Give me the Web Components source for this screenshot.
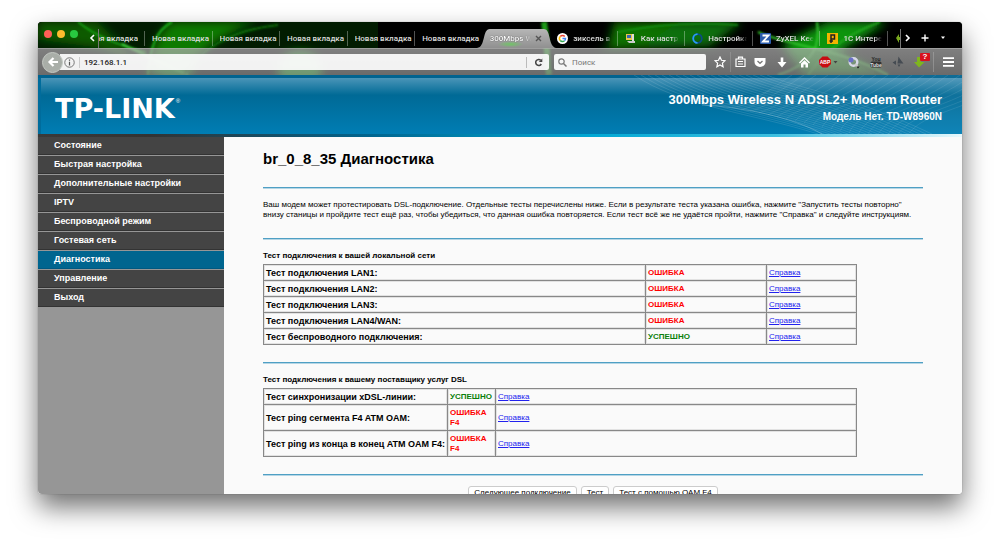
<!DOCTYPE html>
<html lang="ru">
<head>
<meta charset="utf-8">
<title>300Mbps Wireless N ADSL2+ Modem Router</title>
<style>
html, body { margin: 0; background: #fff; }
body { font-family: "Liberation Sans", Arial, sans-serif; font-size: 8px; color: #000; overflow: hidden; }
</style>
</head>
<body>
<browser-window>
  <browser-chrome slot="chrome"></browser-chrome>
  <router-header slot="page"></router-header>
  <router-page slot="page">
    <side-menu slot="side"></side-menu>
    <diagnostics-page slot="main"></diagnostics-page>
  </router-page>
</browser-window>
<script>
const define = (name, html, setup) => customElements.define(name, class extends HTMLElement {
  connectedCallback() {
    if (this.shadowRoot) return;
    this.attachShadow({ mode: 'open' }).innerHTML = html;
    if (setup) setup(this, this.shadowRoot);
  }
});

define('browser-window', `
<style>
:host { display: flex; flex-direction: column; box-sizing: border-box; height: 100vh; padding: 22px 38px 54px; }
.win { display: flex; flex-direction: column; flex: 1; min-width: 0; min-height: 0; overflow: hidden; border-radius: 4px; background: #fafafa; }
.shade { display: flex; flex: 1; min-height: 0; border-radius: 4px; box-shadow: 0 0 1px rgba(0,0,0,.5), 0 13px 27px rgba(0,0,0,.56); }
</style>
<div class="shade"><div class="win"><slot name="chrome"></slot><slot name="page"></slot></div></div>`);

define('browser-tab', `
<style>
:host { display: block; min-width: 0; position: relative; color: #dcdcdc; font-weight: 500; }
.tab { all: unset; position: relative; box-sizing: border-box; display: flex; align-items: center; gap: 5px; width: 100%; height: 26px; padding: 6px 2px 0 7px; cursor: default; }
.tab::after { content: ""; position: absolute; right: 0; top: 9px; width: 1px; height: 15px; background: rgba(255,255,255,.32); }
.txt { flex: 1; min-width: 0; overflow: hidden; white-space: nowrap; display: flex; }
:host([fade]) .tab { padding-right: 6px; }
:host([fade]) .txt { -webkit-mask-image: linear-gradient(90deg, #000 80%, transparent); mask-image: linear-gradient(90deg, #000 80%, transparent); }
:host([plain]) .tab::after { display: none; }
:host([active]) { color: #fff; text-shadow: 0 0 1px #222; }
:host([active]) .tab { gap: 2px; }
.shape { display: none; }
:host([active]) .shape { display: block; position: absolute; left: -6px; top: 7px; width: calc(100% + 12px); height: 19px; }
:host([tail]) .txt { justify-content: flex-end; }
:host([tail]) .tab { padding-left: 0; padding-right: 7px; }
::slotted(svg) { width: 11px; height: 11px; flex: none; }
</style>
<svg class="shape" viewBox="0 0 80 19" preserveAspectRatio="none" aria-hidden="true"><defs><linearGradient id="g" x1="0" y1="0" x2="0" y2="1"><stop offset="0" stop-color="#b6b6b6"/><stop offset="1" stop-color="#909090"/></linearGradient><radialGradient id="h" cx=".42" cy=".8" r=".16"><stop offset="0" stop-color="#6fc565"/><stop offset="1" stop-color="#6fc565" stop-opacity="0"/></radialGradient></defs><path d="M0 19C9 18 5 0 13 0H67C75 0 71 18 80 19Z" fill="url(#g)"/><path d="M0 19C9 18 5 0 13 0H67C75 0 71 18 80 19Z" fill="url(#h)"/></svg>
<button class="tab" role="tab"><slot name="icon"></slot><span class="txt"><slot></slot></span><slot name="end"></slot></button>`);

define('browser-chrome', `
<style>
:host { display: block; position: relative; flex: none; background: #010; font-family: Roboto, "Open Sans", sans-serif; font-size: 8px; }
button { all: unset; display: flex; align-items: center; justify-content: center; box-sizing: border-box; cursor: default; }
.aurora { position: absolute; inset: 0; width: 100%; height: 100%; }
.tabs { position: relative; display: flex; height: 26px; color: #fff; }
.lights { display: flex; gap: 5px; padding: 8px 0 0 6px; width: 44px; box-sizing: border-box; }
.lights i { width: 8px; height: 8px; border-radius: 50%; }
.scroll { width: 17px; padding: 5px 0 0 2px; }
.strip { flex: 1; min-width: 0; display: grid; grid-template-columns: 46px repeat(11, minmax(0, 1fr)) 12px; overflow: hidden; box-shadow: -1px 0 #777, 1px 0 #777; clip-path: inset(7px -1px 0 -1px); }
.end { display: flex; padding: 5px 0 0 1px; }
.end button { width: 17px; }
.end button + button { width: 18px; }
.bar { position: relative; display: flex; align-items: center; height: 27px; box-sizing: border-box; padding-left: 4px; background: linear-gradient(rgba(176,176,176,.72), rgba(140,140,140,.76)); border-top: 1px solid rgba(200,200,200,.55); }
.back { width: 21px; height: 21px; flex: none; border-radius: 50%; background: #a9aea8; border: 1px solid #c4c9c3; position: relative; z-index: 1; }
.url { display: flex; align-items: center; flex: 1; min-width: 0; height: 16px; margin-left: -3px; padding-left: 4px; gap: 4px; background: rgba(255,255,255,.91); border-radius: 0 2px 2px 0; }
.url button { width: 23px; height: 11px; border-left: 1px solid #bbb; }
input { all: unset; flex: 1; min-width: 0; color: #222; font-size: 8px; }
.url input { border-left: 1px solid #ccc; padding-left: 4px; height: 11px; line-height: 11px; font-weight: 500; }
.search { display: flex; align-items: center; gap: 5px; box-sizing: border-box; width: 152px; height: 16px; margin: 0 3px 0 5px; padding-left: 4px; background: rgba(255,255,255,.93); border-radius: 2px; }
input::placeholder { color: #777; opacity: 1; }
.tools { display: grid; grid-template-columns: 21px 19px 22px 22px 22px 27px 23px 22px 21px 25px 29px; }
.tools button { height: 20px; }
.tools button:nth-child(2) { border-left: 1px solid rgba(255,255,255,.15); }
.tools .menu { border-left: 1px solid rgba(255,255,255,.2); }
.dl { position: relative; }
.badge { position: absolute; right: 3px; top: 1px; width: 10px; height: 8px; border-radius: 1px; background: #d8101c; color: #fff; font: bold 8px/8px "Liberation Sans", sans-serif; text-align: center; }
svg { display: block; }
</style>
<svg class="aurora" viewBox="0 0 924 53" preserveAspectRatio="none" aria-hidden="true">
<defs><filter id="b"><feGaussianBlur stdDeviation="5"/></filter><filter id="s"><feGaussianBlur stdDeviation="1"/></filter></defs>
<rect width="924" height="53" fill="#000"/>
<rect width="340" height="26" fill="#021c01"/>
<g filter="url(#b)">
<path d="M0 0H60L100 40 60 26 0 18Z" fill="#075a05"/>
<path d="M108 53C114 26 122 8 134 0H220C180 14 160 30 148 53Z" fill="#087a05"/>
<path d="M630 0H704L672 24 560 28 600 14Z" fill="#0a7007"/>
<path d="M744 22 790 0H850L800 30 850 53H766Z" fill="#0f940b"/>
<path d="M576 0H640L600 26H570Z" fill="#0a7206"/>
<ellipse cx="262" cy="48" rx="22" ry="18" fill="#19b514"/>
<ellipse cx="136" cy="46" rx="20" ry="12" fill="#16a812"/>
</g>
<g filter="url(#s)" fill="none">
<path d="M40 0C60 16 82 24 108 30" stroke="#18a013" stroke-width="2"/>
<path d="M134 0C118 8 112 26 110 53" stroke="#22b81c" stroke-width="2"/>
<path d="M84 22C104 32 130 44 150 53" stroke="#45dd3d" stroke-width="2"/>
<path d="M146 53C160 30 190 8 240 3" stroke="#0c7009" stroke-width="2"/>
<path d="M506 0C509 20 509 40 511 53" stroke="#1a9a15" stroke-width="6"/>
<path d="M779 0C782 20 780 40 740 53" stroke="#36c830" stroke-width="2"/>
<path d="M842 0C810 12 790 26 770 53" stroke="#23a81e" stroke-width="2"/>
<path d="M720 10C750 24 800 26 850 53" stroke="#35c82e" stroke-width="2"/>
<path d="M580 10C620 2 660 0 700 3" stroke="#12900e" stroke-width="2"/>
</g></svg>
<div class="tabs" role="tablist">
<div class="lights"><i style="background:#ff5f57"></i><i style="background:#fdbc2e"></i><i style="background:#28c940"></i></div>
<button class="scroll" aria-label="Назад по вкладкам"><svg width="6" height="8" viewBox="0 0 6 8"><path d="M5 1 2 4l3 3" fill="none" stroke="#fff" stroke-width="1.6"/></svg></button>
<div class="strip">
<browser-tab tail>Новая вкладка</browser-tab>
<browser-tab>Новая вкладка</browser-tab>
<browser-tab>Новая вкладка</browser-tab>
<browser-tab>Новая вкладка</browser-tab>
<browser-tab>Новая вкладка</browser-tab>
<browser-tab plain>Новая вкладка</browser-tab>
<browser-tab active plain fade>300Mbps W<svg slot="end" viewBox="0 0 11 11"><path d="M3 3l5 5M8 3l-5 5" stroke="#555" stroke-width="1.4"/></svg></browser-tab>
<browser-tab fade><svg slot="icon" viewBox="0 0 22 22"><circle cx="11" cy="11" r="11" fill="#fff"/><g fill="none" stroke-width="3"><path d="M6.5 7A6 6 0 0 1 15.500 7" stroke="#ea4335"/><path d="M6.500 7A6 6 0 0 0 6.500 15" stroke="#fbbc05"/><path d="M6.500 15A6 6 0 0 0 15 15.500" stroke="#34a853"/><path d="M15 15.500A6 6 0 0 0 17 11H11" stroke="#4285f4"/></g></svg>зиксель в с</browser-tab>
<browser-tab fade><svg slot="icon" viewBox="0 0 11 11"><rect x="1" y="1" width="6" height="6" fill="#e8c84a"/><rect x="2" y="2" width="4" height="3" fill="#3567b5"/><path d="M7 1h2v7H7z" fill="#ddd"/><path d="M2 8h8v2H4z" fill="#ccc"/></svg>Как настр</browser-tab>
<browser-tab fade><svg slot="icon" viewBox="0 0 11 11"><circle cx="5.500" cy="5.500" r="4.300" fill="none" stroke="#0b4a8a" stroke-width="1.800"/><path d="M5.500 9.800A4.300 4.300 0 0 1 5.500 1.200" fill="none" stroke="#2a9df4" stroke-width="1.800"/></svg>Настройка</browser-tab>
<browser-tab fade><svg slot="icon" viewBox="0 0 11 11"><rect width="11" height="11" rx="1" fill="#2b5cad"/><path d="M2.500 2.500h6L3 8.500h6" fill="none" stroke="#fff" stroke-width="1.800"/></svg>ZyXEL Kee</browser-tab>
<browser-tab fade><svg slot="icon" viewBox="0 0 11 11"><rect width="11" height="11" fill="#f5b400"/><path d="M4 10V2h3.500v4H4M2.500 8H6" fill="none" stroke="#222" stroke-width="1.500"/></svg>1С Интере</browser-tab>
<browser-tab plain><svg slot="icon" viewBox="0 0 11 11"><path d="M1 5l3-4v3h3v3H4v3z" fill="#7aa81e"/></svg></browser-tab>
</div>
<div class="end">
<button aria-label="Вперёд по вкладкам"><svg style="margin-right:3px" width="6" height="8" viewBox="0 0 6 8"><path d="M1 1l3 3-3 3" fill="none" stroke="#fff" stroke-width="1.600"/></svg></button>
<button aria-label="Новая вкладка"><svg style="margin-right:5px" width="8" height="8" viewBox="0 0 8 8"><path d="M4 .500v7M.500 4h7" stroke="#fff" stroke-width="1.400"/></svg></button>
<button aria-label="Список вкладок" style="width:26px"><svg style="margin-right:12px" width="6" height="4" viewBox="0 0 6 4"><path d="M1 .500h4L3 3z" fill="#fff"/></svg></button>
</div>
</div>
<div class="bar">
<button class="back" aria-label="Назад"><svg width="12" height="12" viewBox="0 0 12 12"><path d="M6.500 2 2.500 6l4 4M2.500 6H11" fill="none" stroke="#fff" stroke-width="2.200"/></svg></button>
<div class="url"><svg width="11" height="11" viewBox="0 0 10 10"><circle cx="5" cy="5" r="4.300" fill="none" stroke="#666" stroke-width=".800"/><path d="M5 2.300v1.200M5 4.300v3.400" stroke="#555" stroke-width="1.100"/></svg>
<input aria-label="Адрес" value="192.168.1.1">
<button aria-label="Обновить"><svg width="9" height="9" viewBox="0 0 9 9"><path d="M7.300 6A3 3 0 1 1 6.800 2.300" fill="none" stroke="#444" stroke-width="1.500"/><path d="M8.300.500v3.500H4.800z" fill="#444"/></svg></button></div>
<div class="search"><svg width="9" height="9" viewBox="0 0 9 9"><circle cx="3.500" cy="3.500" r="2.700" fill="none" stroke="#777" stroke-width="1.200"/><path d="M5.500 5.500 8.500 8.500" stroke="#777" stroke-width="1.500"/></svg><input aria-label="Поиск" placeholder="Поиск"></div>
<div class="tools">
<button aria-label="Закладка"><svg width="12" height="12" viewBox="0 0 12 12"><path d="M6 1l1.500 3.300 3.500.400-2.600 2.400.700 3.600L6 8.900 2.900 10.700l.700-3.600L1 4.700l3.500-.400z" fill="none" stroke="#fff" stroke-width="1.200"/></svg></button>
<button aria-label="Все закладки"><svg width="11" height="12" viewBox="0 0 11 12"><path d="M1 3h9v7.500H1zM3.500 3V1.200h4V3M3 5.500h5M3 8h5M1 5.500h.5M1 8h.5" fill="none" stroke="#fff" stroke-width="1.200"/></svg></button>
<button aria-label="Pocket"><svg width="12" height="11" viewBox="0 0 12 11"><path d="M.500 1h11v4a5.500 5 0 0 1-11 0z" fill="#fff"/><path d="M3.500 4 6 6.300 8.500 4" fill="none" stroke="#777" stroke-width="1.300"/></svg></button>
<button aria-label="Загрузки"><svg width="10" height="11" viewBox="0 0 10 11"><path d="M3.700.500h2.600v4.500H9.500L5 10.500.500 5h3.200z" fill="#fff"/></svg></button>
<button aria-label="Домой"><svg width="11" height="11" viewBox="0 0 11 11"><path d="M.500 6 5.500 1l5 5" fill="none" stroke="#fff" stroke-width="1.300"/><path d="M5.500 3.300l3.500 3.300V10.500H6.500V7.500h-2v3H2V6.600z" fill="#fff"/></svg></button>
<button aria-label="Adblock Plus"><svg width="20" height="12" viewBox="0 0 20 12"><path d="M3.500.500h5L12 4v4L8.500 11.500h-5L0 8V4z" fill="#c70d12"/><path d="M14.500 5h4l-2 2.500z" fill="#444"/><text x="6" y="8" font-size="5" font-weight="700" fill="#fff" text-anchor="middle" font-family="Liberation Sans, sans-serif">ABP</text></svg></button>
<button aria-label="Прокси"><svg width="13" height="13" viewBox="0 0 13 13"><circle cx="6.500" cy="6" r="3.800" fill="none" stroke="#d8d8e8" stroke-width="2.400"/><circle cx="4" cy="4" r="2.500" fill="#6a70c8"/><path d="M8 8l3 3" stroke="#ccc" stroke-width="2"/><path d="M9.500 10.500h3l-1.500 2z" fill="#111"/></svg></button>
<button aria-label="YouTube"><svg width="12" height="12" viewBox="0 0 12 12" font-family="Liberation Sans, sans-serif" font-weight="700" font-size="5"><text x="6" y="5" fill="#222" text-anchor="middle">You</text><rect x=".500" y="5.500" width="11" height="6" rx="1.500" fill="#333"/><text x="6" y="10.500" fill="#ddd" text-anchor="middle">Tube</text></svg></button>
<button aria-label="Уведомления"><svg width="12" height="12" viewBox="0 0 12 12"><path d="M6.500.500C8 3 9 4.500 11.500 7.500H5.500zM4 4.500V9L.500 6.500zM5.500 8.500h3L7 11z" fill="#454b52"/></svg></button>
<button aria-label="Скачать" class="dl"><svg width="13" height="12" viewBox="0 0 13 12"><path d="M3 1h4v5h3.500L5 11.500 0 6h3z" fill="#7fb51e"/></svg><span class="badge">?</span></button>
<button aria-label="Меню" class="menu"><svg width="11" height="10" viewBox="0 0 11 10"><path d="M0 1.200h11M0 5h11M0 8.800h11" stroke="#fff" stroke-width="1.800"/></svg></button>
</div>
</div>`);

define('router-header', `
<style>
:host { display: block; flex: none; color: #fff; }
.band { position: relative; display: flex; justify-content: space-between; height: 59px; background: linear-gradient(#006390 0 3px, transparent 3px), linear-gradient(90deg, #006c9c 0 3px, transparent 3px), linear-gradient(#4a95b8 3px, #006a96 20px, #007db3 58px); }
svg { position: absolute; right: 0; top: 0; width: 340px; height: 59px; }
.logo { display: flex; padding: 19px 0 0 17px; font: 700 27px/30px "DejaVu Sans", sans-serif; }
sup { font: 6px/14px "Liberation Sans", sans-serif; padding-left: 1px; }
.model { position: relative; padding: 17px 20px 0 0; text-align: right; font-weight: 700; }
h1 { margin: 0; font-size: 13px; line-height: 16px; }
p { margin: 0; font-size: 10px; line-height: 18px; }
.line { height: 3px; background: linear-gradient(90deg, #3a3a3a, #333 12%, #00658f 36%, #00a8d4 60%, #3fc0e0 80%, #e8f8fc); }
</style>
<div class="band"><svg viewBox="0 0 340 59" aria-hidden="true"></svg><div class="logo">TP-LINK<sup>®</sup></div>
<div class="model"><h1>300Mbps Wireless N ADSL2+ Modem Router</h1><p>Модель Нет. TD-W8960N</p></div></div>
<div class="line"></div>`, (el, root) => {
  let falling = '', rising = '';
  for (let i = 0; i < 20; i++) {
    falling += `M${12 + i * 7} 0C${60 + i * 6} ${32 - i} ${130 + i * 5} ${38 - i} ${196 + i * 6} 59`;
    rising += `M${170 + i * 12} 0C${140 + i * 11} ${20 + i} ${120 + i * 9} 34 ${110 + i * 9} ${32 + i * 2}`;
  }
  root.querySelector('svg').innerHTML = `<path d="M84 30C130 32 170 42 200 59H340V0H180C150 14 120 28 84 30Z" fill="#fff" opacity=".06"/><g fill="none" stroke="#fff" stroke-width=".6"><path d="${falling}" opacity=".2"/><path d="${rising}" opacity=".16"/></g><path d="M80 30C120 32 170 42 200 59" fill="none" stroke="#fff" opacity=".25"/>`;
});

define('router-page', `
<style>
:host { display: grid; grid-template-columns: 186px minmax(0, 1fr); flex: 1; min-height: 0; overflow: hidden; background: #fafafa; }
</style><slot name="side"></slot><slot name="main"></slot>`);

define('side-menu', `
<style>
:host { display: block; background: #969696; }
ul { list-style: none; margin: 0; padding: 0; }
a { display: block; height: 18px; box-sizing: border-box; padding-left: 16px; background: #444; border-bottom: 1px solid #333; color: #fff; font-weight: 700; font-size: 9px; line-height: 16px; text-decoration: none; }
li { border-bottom: 1px solid #969696; }
a[aria-current] { background: #00658f; border-color: #005880; }
</style><nav><ul></ul></nav>`, (el, root) => {
  root.querySelector('ul').innerHTML = ['Состояние', 'Быстрая настройка', 'Дополнительные настройки', 'IPTV', 'Беспроводной режим', 'Гостевая сеть', 'Диагностика', 'Управление', 'Выход']
    .map(t => `<li><a href="#"${t === 'Диагностика' ? ' aria-current="page"' : ''}>${t}</a></li>`).join('');
});

define('test-table', `
<style>
:host { display: block; }
table { width: 90%; border-collapse: collapse; table-layout: fixed; }
caption { text-align: left; font-weight: 700; font-size: 8px; line-height: 10px; padding-bottom: 3px; white-space: nowrap; }
th, td { border: 1px solid #888; box-shadow: inset 0 0 0 1px #e2e2e2; padding: 3px 2px 2px; text-align: left; font-size: 9px; line-height: 10px; height: 10px; }
th { white-space: nowrap; }
td.s { font-weight: 700; font-size: 8px; }
td.a { font-size: 8px; font-weight: 400; }
.ok { color: #0a7f0a; } .bad { color: #f00; }
a { color: #22e; }
</style><table><caption></caption><colgroup></colgroup><tbody></tbody></table>`, (el, root) => {
  root.querySelector('caption').textContent = el.getAttribute('heading');
  root.querySelector('colgroup').innerHTML = el.getAttribute('cols').split(' ').map(w => `<col style="width:${w}">`).join('');
  root.querySelector('tbody').innerHTML = el.rows.map(([n, s]) =>
    `<tr><th scope="row">${n}</th><td class="s ${s === 'УСПЕШНО' ? 'ok' : 'bad'}">${s}</td><td class="a"><a href="#">Справка</a></td></tr>`).join('');
});

define('diagnostics-page', `
<style>
:host { display: block; padding: 13px 39px 0; }
h2 { margin: 0; font-size: 15px; line-height: 18px; }
hr { margin: 0; border: 0; height: 1px; background: #4f9fc4; box-shadow: 0 1px #b5d6e5; }
p { margin: 12px 0 18px; font-size: 8px; line-height: 10px; }
test-table { padding: 12px 0 17px; }
.btns { display: flex; justify-content: center; gap: 4px; padding-top: 11px; }
button { font: 8px/12px "Liberation Sans", sans-serif; color: #000; padding: 0 5px; background: #fff; border: 1px solid #ccc; border-radius: 3px; white-space: nowrap; }
.head { padding-bottom: 19px; }
</style>
<div class="head"><h2>br_0_8_35 Диагностика</h2></div>
<hr>
<p>Ваш модем может протестировать DSL-подключение. Отдельные тесты перечислены ниже. Если в результате теста указана ошибка, нажмите "Запустить тесты повторно" внизу станицы и пройдите тест ещё раз, чтобы убедиться, что данная ошибка повторяется. Если тест всё же не удаётся пройти, нажмите "Справка" и следуйте инструкциям.</p>
<hr>
<div id="lan"></div>
<hr>
<div id="dsl"></div>
<hr>
<div class="btns"><button>Следующее подключение</button><button>Тест</button><button>Тест с помощью OAM F4</button></div>`, (el, root) => {
  const add = (id, heading, cols, rows) => {
    const t = document.createElement('test-table');
    t.setAttribute('heading', heading);
    t.setAttribute('cols', cols);
    t.rows = rows;
    root.getElementById(id).append(t);
  };
  const bad = 'ОШИБКА', ok = 'УСПЕШНО';
  add('lan', 'Тест подключения к вашей локальной сети', '382px auto 90px', [
    ['Тест подключения LAN1:', bad], ['Тест подключения LAN2:', bad], ['Тест подключения LAN3:', bad],
    ['Тест подключения LAN4/WAN:', bad], ['Тест беспроводного подключения:', ok]]);
  add('dsl', 'Тест подключения к вашему поставщику услуг DSL', '184px 48px auto', [
    ['Тест синхронизации xDSL-линии:', ok], ['Тест ping сегмента F4 ATM OAM:', bad + ' F4'], ['Тест ping из конца в конец ATM OAM F4:', bad + ' F4']]);
});
</script>
</body>
</html>
